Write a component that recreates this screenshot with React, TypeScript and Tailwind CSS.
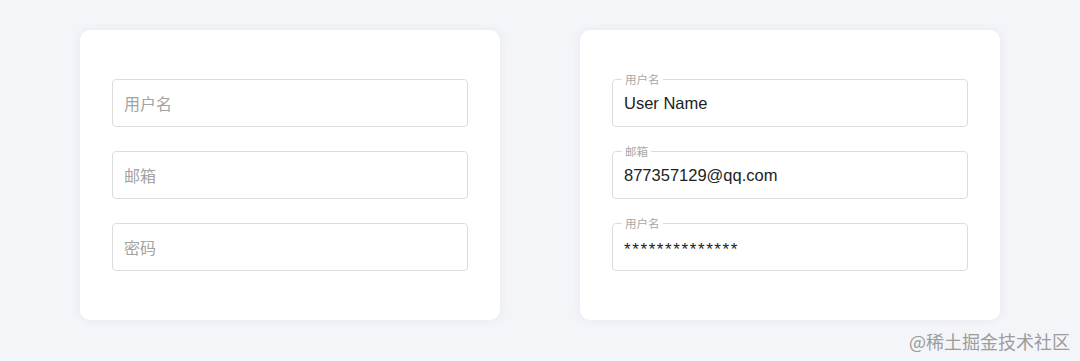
const cjk = { fontFamily: '"Noto Sans CJK SC", "Noto Sans", sans-serif' };
const latin = { fontFamily: '"Liberation Sans", "Noto Sans CJK SC", sans-serif' };

function PlainInput({ placeholder }: { placeholder: string }) {
  return (
    <div className="h-12 border border-[#dcdcdc] rounded-[4px] flex items-center px-[11px] bg-white">
      <span className="text-[16px] text-[#a3a3a3]" style={cjk}>
        {placeholder}
      </span>
    </div>
  );
}

function LabeledInput({ label, value, stars }: { label: string; value: string; stars?: boolean }) {
  return (
    <div className="relative h-12 border border-[#dcdcdc] rounded-[4px] flex items-center px-[11px] bg-white">
      <span
        className="absolute left-[9px] top-[-8px] bg-white px-[3px] text-[11.5px] leading-[14px] text-[#a8a8a8]"
        style={cjk}
      >
        {label}
      </span>
      <span
        className={
          stars
            ? 'text-[17px] text-[#222] tracking-[1.6px] translate-y-[3px]'
            : 'text-[16.5px] text-[#222]'
        }
        style={latin}
      >
        {value}
      </span>
    </div>
  );
}

export default function App() {
  return (
    <div className="relative w-[1080px] h-[361px] bg-[#f4f5f9] flex gap-20 px-20 pt-[30px]">
      <div className="w-[420px] h-[290px] bg-white rounded-[10px] shadow-[0_0_8px_rgba(220,224,234,0.6)] px-8 pt-[49px] flex flex-col gap-6">
        <PlainInput placeholder="用户名" />
        <PlainInput placeholder="邮箱" />
        <PlainInput placeholder="密码" />
      </div>
      <div className="w-[420px] h-[290px] bg-white rounded-[10px] shadow-[0_0_8px_rgba(220,224,234,0.6)] px-8 pt-[49px] flex flex-col gap-6">
        <LabeledInput label="用户名" value="User Name" />
        <LabeledInput label="邮箱" value="877357129@qq.com" />
        <LabeledInput label="用户名" value="**************" stars />
      </div>
      <span
        className="absolute right-[10px] bottom-[11px] text-[18px] text-[#9c9c9c] leading-none"
        style={cjk}
      >
        @稀土掘金技术社区
      </span>
    </div>
  );
}
